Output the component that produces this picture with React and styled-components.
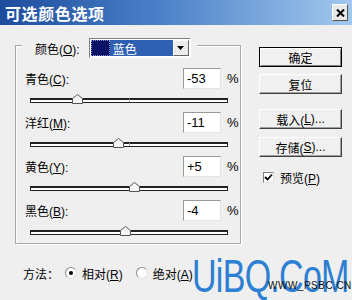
import React from 'react';
import styled, { createGlobalStyle } from 'styled-components';

const GlobalStyle = createGlobalStyle`
  html, body { margin: 0; padding: 0; background: #efefef; }
  body { font-family: "Liberation Sans", "Noto Sans CJK SC", sans-serif; font-size: 12px; color: #000; }
`;

const rows = [
  { name: '青色', key: 'C', value: -53 },
  { name: '洋红', key: 'M', value: -11 },
  { name: '黄色', key: 'Y', value: 5 },
  { name: '黑色', key: 'B', value: -4 },
];

const fmt = (v) => (v > 0 ? '+' + v : String(v));

const App = () => (
  <>
    <GlobalStyle />
    <Dialog>
      <TitleBar>
        <Title>可选颜色选项</Title>
        <CloseBtn>
          <svg width="9" height="8" viewBox="0 0 9 8">
            <path d="M1 0.5 L8 7.5 M8 0.5 L1 7.5" stroke="#000" strokeWidth="2" />
          </svg>
        </CloseBtn>
      </TitleBar>
      <Body>
        <LeftCol>
          <GroupBox>
            <Legend>
              <span>颜色(<U>O</U>):</span>
              <Select>
                <Swatch />
                <SelectText>蓝色</SelectText>
                <ArrowBtn>
                  <svg width="7" height="4" viewBox="0 0 7 4">
                    <path d="M0 0 H7 L3.5 4 Z" fill="#000" />
                  </svg>
                </ArrowBtn>
              </Select>
            </Legend>
            {rows.map((r) => (
              <Row key={r.key}>
                <RowTop>
                  <span>{r.name}(<U>{r.key}</U>):</span>
                  <Input>{fmt(r.value)}</Input>
                  <Pct>%</Pct>
                </RowTop>
                <SliderArea>
                  <Track>
                    <Tick />
                    <Thumb style={{ left: `${((r.value + 100) / 200) * 100}%` }}>
                      <svg width="11" height="10" viewBox="0 0 11 10">
                        <path d="M0.5 4.5 L5.5 0.5 L10.5 4.5 V9.5 H0.5 Z" fill="#f6f6f6" stroke="#555" />
                      </svg>
                    </Thumb>
                  </Track>
                </SliderArea>
              </Row>
            ))}
          </GroupBox>
          <MethodRow>
            <span>方法：</span>
            <Radio checked />
            <RadioLabel>相对(<U>R</U>)</RadioLabel>
            <Radio />
            <RadioLabel>绝对(<U>A</U>)</RadioLabel>
          </MethodRow>
        </LeftCol>
        <RightCol>
          <Button primary>确定</Button>
          <Button mt={7}>复位</Button>
          <Button mt={15}>载入(<U>L</U>)...</Button>
          <Button mt={8}>存储(<U>S</U>)...</Button>
          <CheckRow>
            <CheckBox>
              <svg width="9" height="9" viewBox="0 0 9 9">
                <path d="M1 4 L3.5 6.5 L8 1.5" stroke="#000" strokeWidth="1.8" fill="none" />
              </svg>
            </CheckBox>
            <span>预览(<U>P</U>)</span>
          </CheckRow>
        </RightCol>
      </Body>
      <Watermark>UiBQ.CoM</Watermark>
      <SmallMark>WWW_PSBC.CN</SmallMark>
    </Dialog>
  </>
);

export default App;

const Dialog = styled.div`
  position: relative;
  width: 352px;
  height: 300px;
  overflow: hidden;
  background: #efefef;
`;

const TitleBar = styled.div`
  height: 25px;
  display: flex;
  align-items: center;
  justify-content: space-between;
  padding: 0 4px 0 5px;
  box-sizing: border-box;
  background: linear-gradient(to right, #1d4c9c 0%, #4b80c8 45%, #a2c8ee 100%);
`;

const Title = styled.div`
  color: #fff;
  font-family: "Noto Sans CJK SC", sans-serif;
  font-weight: bold;
  font-size: 16px;
  letter-spacing: 0.6px;
`;

const CloseBtn = styled.div`
  width: 16px;
  height: 17px;
  display: flex;
  align-items: center;
  justify-content: center;
  background: #e8e8e8;
  border: 1px solid;
  border-color: #fff #555 #555 #fff;
  box-sizing: border-box;
`;

const Body = styled.div`
  display: flex;
  padding: 20px 0 0 15px;
`;

const LeftCol = styled.div`
  width: 226px;
`;

const GroupBox = styled.div`
  border: 1px solid #a8a8a8;
  box-shadow: inset 1px 1px 0 #fff, 1px 1px 0 #fff;
  height: 199px;
  box-sizing: border-box;
  padding: 0 0 0 9px;
`;

const Legend = styled.div`
  display: flex;
  width: max-content;
  align-items: center;
  margin: -8px 0 10px -3px;
  padding: 0 6px 0 13px;
  gap: 9px;
  height: 20px;
  background: #efefef;
`;

const U = styled.span`
  text-decoration: underline;
`;

const Select = styled.div`
  display: flex;
  align-items: stretch;
  width: 102px;
  height: 20px;
  box-sizing: border-box;
  border: 1px solid;
  border-color: #808080 #fff #fff #808080;
  background: #fff;
  padding: 1px;
`;

const Swatch = styled.div`
  width: 19px;
  background: #0c1266;
  border: 1px dotted #7e96c8;
  box-sizing: border-box;
`;

const SelectText = styled.div`
  flex: 1;
  background: #2f5fb0;
  color: #fff;
  font-family: "Noto Sans CJK SC", sans-serif;
  display: flex;
  align-items: center;
  padding-left: 3px;
`;

const ArrowBtn = styled.div`
  width: 16px;
  display: flex;
  align-items: center;
  justify-content: center;
  background: #ececec;
  border: 1px solid;
  border-color: #fff #666 #666 #fff;
  box-sizing: border-box;
`;

const Row = styled.div`
  display: flex;
  flex-direction: column;
`;

const RowTop = styled.div`
  display: flex;
  align-items: center;
  height: 21px;
  & > span:first-child { flex: 1; }
`;

const Input = styled.div`
  width: 38px;
  height: 21px;
  box-sizing: border-box;
  background: #fff;
  border: 1px solid;
  border-color: #9a9a9a #e4e4e4 #e4e4e4 #9a9a9a;
  font-size: 13px;
  display: flex;
  align-items: center;
  padding-left: 3px;
`;

const Pct = styled.span`
  width: 19px;
  padding-left: 6px;
  box-sizing: border-box;
  font-size: 13px;
`;

const SliderArea = styled.div`
  height: 23px;
  padding: 9px 12px 0 5px;
  box-sizing: border-box;
`;

const Track = styled.div`
  position: relative;
  height: 5px;
  border: 1px solid #222;
  border-top-width: 2px;
  box-sizing: border-box;
  background: #fff;
`;

const Tick = styled.div`
  position: absolute;
  left: 50%;
  top: -1px;
  width: 1px;
  height: 3px;
  background: #aaa;
`;

const Thumb = styled.div`
  position: absolute;
  top: -6px;
  width: 11px;
  height: 10px;
  margin-left: -5px;
  line-height: 0;
`;

const MethodRow = styled.div`
  display: flex;
  align-items: center;
  margin-top: 22px;
  padding-left: 8px;
  height: 14px;
`;

const Radio = styled.div`
  width: 12px;
  height: 12px;
  box-sizing: border-box;
  margin: 0 5px 0 6px;
  border-radius: 50%;
  background: #fff;
  border: 1px solid;
  border-color: #8a8a8a #e0e0e0 #e0e0e0 #8a8a8a;
  display: flex;
  align-items: center;
  justify-content: center;
  &::after {
    content: '';
    width: 4px;
    height: 4px;
    border-radius: 50%;
    background: ${(p) => (p.checked ? '#000' : 'transparent')};
  }
`;

const RadioLabel = styled.span`
  margin-right: 7px;
`;

const RightCol = styled.div`
  display: flex;
  flex-direction: column;
  margin-left: 18px;
  padding-top: 2px;
`;

const Button = styled.div`
  width: 83px;
  height: 20px;
  box-sizing: border-box;
  margin-top: ${(p) => p.mt || 0}px;
  display: flex;
  align-items: center;
  justify-content: center;
  background: #f0f0f0;
  border: 1px solid;
  border-color: ${(p) => (p.primary ? '#000' : '#fff #404040 #404040 #fff')};
  box-shadow: ${(p) =>
    p.primary ? 'inset 1px 1px 0 #fff, inset -1px -1px 0 #808080' : 'inset -1px -1px 0 #a0a0a0'};
`;

const CheckRow = styled.div`
  display: flex;
  align-items: center;
  gap: 6px;
  margin-top: 14px;
  padding-left: 4px;
  height: 12px;
`;

const CheckBox = styled.div`
  width: 11px;
  height: 11px;
  box-sizing: border-box;
  background: #fff;
  border: 1px solid;
  border-color: #808080 #e0e0e0 #e0e0e0 #808080;
  display: flex;
  align-items: center;
  justify-content: center;
`;

const Watermark = styled.div`
  position: absolute;
  left: 192px;
  top: 252px;
  font-family: "Liberation Sans", sans-serif;
  font-size: 46px;
  line-height: 48px;
  color: #2c7fd2;
  letter-spacing: -1px;
  transform: scaleX(0.74);
  transform-origin: left top;
  white-space: nowrap;
`;

const SmallMark = styled.div`
  position: absolute;
  left: 268px;
  top: 280px;
  font-family: "Liberation Sans", sans-serif;
  font-size: 10px;
  color: #111;
  letter-spacing: 0.5px;
`;
